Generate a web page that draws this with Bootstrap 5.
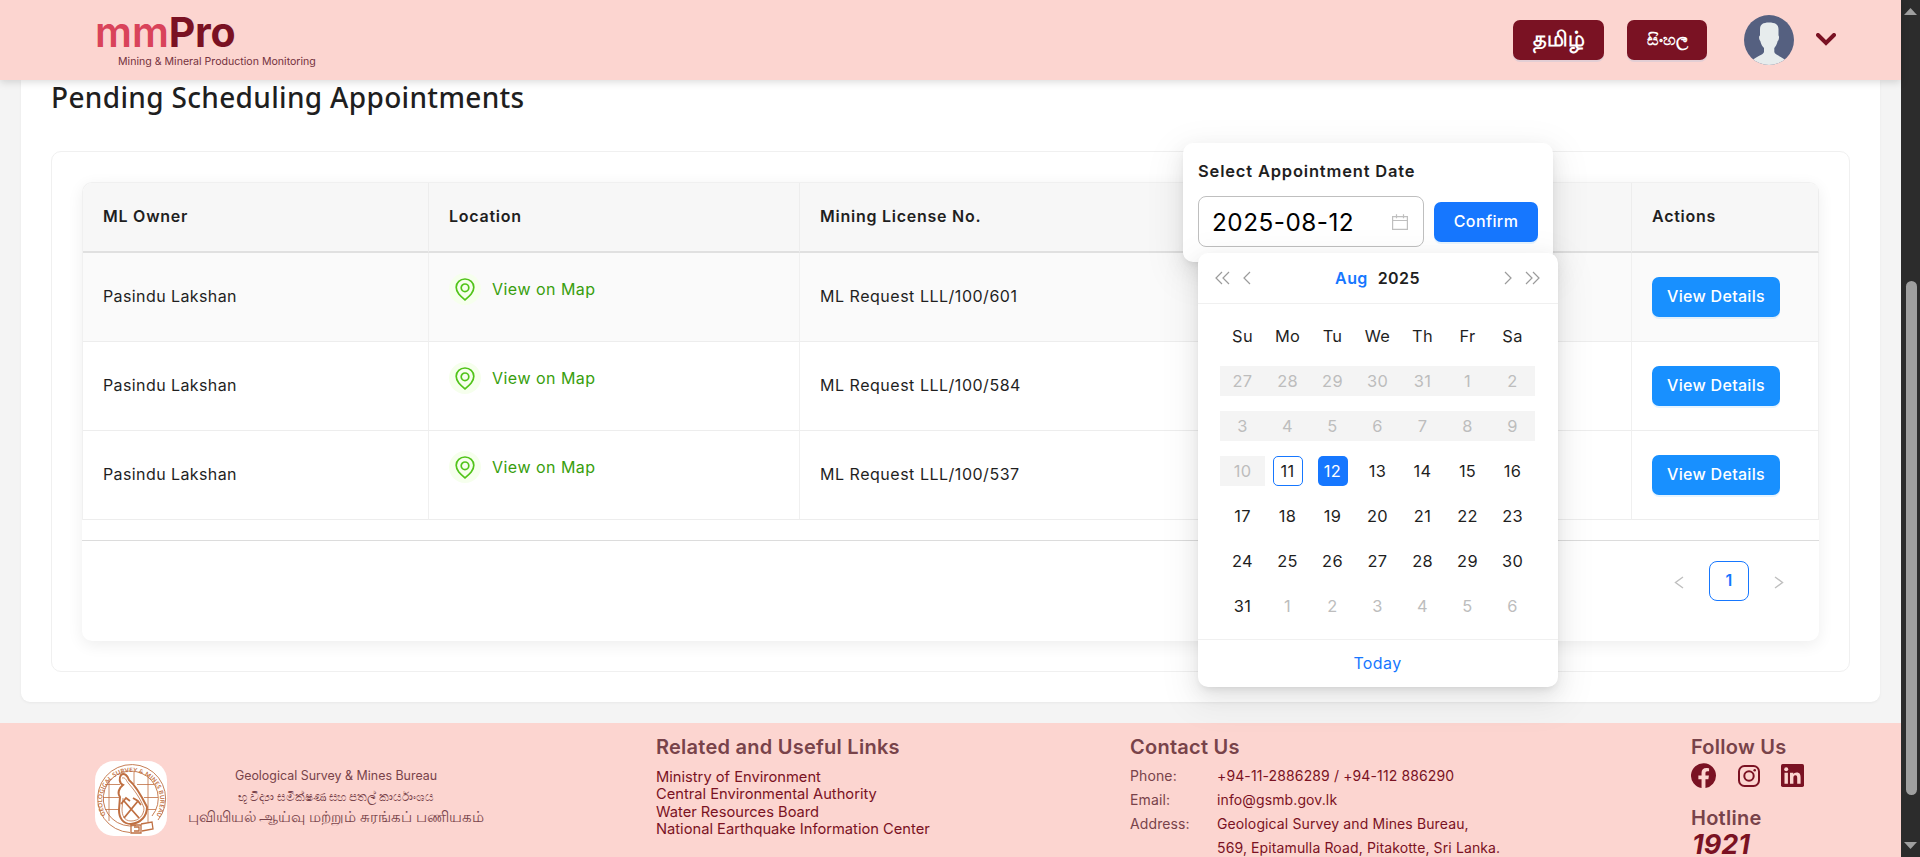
<!DOCTYPE html>
<html lang="en">
<head>
<meta charset="utf-8">
<meta name="viewport" content="width=device-width, initial-scale=1">
<title>mmPro - Pending Scheduling Appointments</title>
<link href="https://cdn.jsdelivr.net/npm/bootstrap@5.3.0/dist/css/bootstrap.min.css" rel="stylesheet">
<style>
:root{--wine:#7a1223;--blue:#1677ff;--ink:#1f1f1f;--line:#f0f0f0}
body{font-family:Inter,"Liberation Sans",sans-serif;font-size:16px;line-height:22px;color:var(--ink);background:#f4f4f4;height:100vh;overflow:hidden;letter-spacing:.4px}
.app-header{height:80px;background:#fcd5d0;z-index:5;box-shadow:0 2px 8px rgba(0,0,0,.15);padding-left:95px;padding-right:65px}
.brand-name{font-size:41px;line-height:43px;font-weight:600;color:#d9435a;letter-spacing:0}
.brand-name b{font-weight:700;color:var(--wine);letter-spacing:-.3px}
.brand-tag{font-size:10.6px;line-height:14px;color:#75323e;margin:1px 0 0 23px;letter-spacing:0}
.btn-lang{height:40px;background:var(--wine);color:#fff;border:0;border-radius:7px;box-shadow:0 2px 0 rgba(5,145,255,.1);letter-spacing:0;padding:0 0 2px}
.btn-lang:hover{background:var(--wine);color:#fff}
.btn-ta{width:91px;font-size:20.8px;font-weight:600;margin-right:23px}
.btn-si{width:80px;font-size:16px;font-weight:600;margin-right:37px}
.chev{margin:0 0 1px -2px}
.page-card{margin:0 21px;padding:0 30px;height:622px;border-radius:0 0 9px 9px;background:#fff;box-shadow:0 1px 3px rgba(0,0,0,.05)}
.page-title{font:500 28px/34px "Noto Sans","Open Sans",sans-serif;letter-spacing:.33px;margin:0 0 37px}
.panel{border:1px solid var(--line);border-radius:10px;padding:30px;height:521px}
.table-box{height:459px;border-radius:10px;background:#fff;box-shadow:0 4px 16px rgba(0,0,0,.07)}
.appt{table-layout:fixed;width:100%;border-collapse:separate;border-spacing:0;border-left:1px solid var(--line);border-top:1px solid var(--line);border-radius:10px 10px 0 0;overflow:hidden}
.c-owner{width:346px}.c-loc{width:371px}.c-lic{width:430px}.c-act{width:187px}
.appt th{height:70px;padding:0 20px 3px;background:#f7f7f7;font-weight:600;letter-spacing:.75px;border-bottom:2px solid #e0e0e0;border-right:1px solid #ededed}
.appt td{height:89px;padding:0 20px 2px;border-bottom:1px solid #ededed;border-right:1px solid var(--line);vertical-align:middle}
.appt td.act{padding-bottom:0}
.appt .no-edge{border-right:0}
.appt td.no-edge{letter-spacing:.52px}
.appt tr.hovered td{background:#fafafa}
.map-link{color:#389e0d;text-decoration:none;margin-bottom:14px;letter-spacing:.48px}
.pin{width:32px;height:32px;border-radius:50%;background:#f6ffed;margin-right:11px}
.btn-details{width:128px;height:40px;border:0;border-radius:7px;background:#1890ff;color:#fff;padding:0 0 2px;font-weight:500;letter-spacing:.3px;box-shadow:0 2px 0 rgba(5,145,255,.1)}
.pager{border-top:1px solid #dcdcdc;margin-top:20px;padding:20px 20px 0;gap:10px}
.pager>*{width:40px;height:40px}
.pager svg{margin-top:2px}
.page-now{border:1px solid var(--blue);border-radius:8px;color:var(--blue);font-weight:600;padding-bottom:2px}
.popover-box{left:1183px;top:143px;width:370px;height:119px;border-radius:10px;background:#fff;padding:15px;box-shadow:0 8px 20px rgba(0,0,0,.08),0 4px 8px -4px rgba(0,0,0,.12),0 11px 35px 10px rgba(0,0,0,.05);z-index:6}
.pop-title{font-size:16.5px;font-weight:600;letter-spacing:.82px;line-height:26px;margin-bottom:12px}
.date-input{width:226px;height:51px;border:1px solid #bfbfbf;border-radius:8px;padding:0 15px 0 13px;font-size:24.3px;letter-spacing:.5px;color:#000}
.btn-confirm{width:104px;height:40px;border:0;border-radius:7px;background:var(--blue);color:#fff;padding:0 0 2px;font-weight:500;letter-spacing:.4px;box-shadow:0 2px 0 rgba(5,145,255,.1)}
.cal{left:1198px;top:253px;width:360px;height:434px;border-radius:10px;background:#fff;box-shadow:0 8px 20px rgba(0,0,0,.08),0 4px 8px -4px rgba(0,0,0,.12),0 11px 35px 10px rgba(0,0,0,.05);z-index:7}
.cal-head{height:51px;border-bottom:1px solid var(--line);padding:0 18px 1px 17px;font-weight:600}
.cal-month{color:var(--blue);margin-right:10px}
.cal-grid{display:grid;grid-template-columns:repeat(7,45px);grid-auto-rows:45px;padding:9px 0 0 22px;height:335px;font-size:16.4px;letter-spacing:.3px}
.cal-grid>div{text-align:center;padding-top:8px;line-height:30px}
.cal-grid span{display:block;height:30px}
.cal-grid .off{color:#bdbdbd}
.cal-grid .shut span{background:#f4f4f4}
.cal-grid .today span,.cal-grid .picked span{width:30px;margin:0 auto;border-radius:5px}
.cal-grid .today span{border:1px solid var(--blue);line-height:28px}
.cal-grid .picked span{background:var(--blue);color:#fff}
.cal-foot{height:48px;border-top:1px solid var(--line);color:var(--blue);padding:0 1px 2px 0}
.app-footer{margin-top:21px;height:160px;background:#fcd5d0;color:#78434a;letter-spacing:0}
.app-footer h5{font-size:20px;font-weight:600;line-height:24px;letter-spacing:.25px;margin:12px 0 0;color:#78434a}
.f-brand{width:656px;padding:38px 0 0 95px}
.f-names{width:300px;margin-left:19px;padding-top:5px;text-align:center;white-space:nowrap;line-height:20px}
.name-en{font-size:12.4px;letter-spacing:.02px}
.name-si{font-size:11.6px;letter-spacing:-.1px;font-weight:500;margin-top:1px}
.name-ta{font-size:15px;font-weight:500}
.f-links{width:474px;font-size:14.7px;line-height:17.3px;color:var(--wine)}
.app-footer .f-links h5{margin-bottom:10px}
.f-contact{width:561px;font-size:14px;line-height:24px;letter-spacing:.12px}
.f-contact dl{margin:5px 0 0}
.f-contact dt{width:87px;font-weight:400}
.f-contact dd{margin:0;color:var(--wine)}
.social{height:25px;margin-top:4px;gap:21.5px}
.app-footer .hot-head{margin-top:18px}
.hotline{font-size:27px;line-height:24px;margin-top:3px;font-weight:700;font-style:italic;color:var(--wine);padding-left:1px}
.scroll-rail{width:19px;background:#2c2c2c;padding:8px 0 8px}
.scroll-thumb{width:11px;height:514px;border-radius:6px;background:#9f9f9f;margin-top:266px;margin-left:1px}
</style>
</head>
<body class="d-flex">
<div class="flex-grow-1 position-relative">
  <header class="app-header position-relative d-flex align-items-center">
    <div class="me-auto">
      <div class="brand-name">mm<b>Pro</b></div>
      <div class="brand-tag">Mining &amp; Mineral Production Monitoring</div>
    </div>
    <button class="btn btn-lang btn-ta" lang="ta">தமிழ்</button>
    <button class="btn btn-lang btn-si" lang="si">සිංහල</button>
    <svg width="50" height="50" viewBox="0 0 50 50" class="me-4"><defs><clipPath id="face"><circle cx="25" cy="25" r="25"/></clipPath></defs><g clip-path="url(#face)"><rect width="50" height="50" fill="#556080"/><path fill="#e7eced" d="M16 14C16 9.500 19 7.500 25 7.500S34.500 9.500 34.500 14V20.500C35.500 21 35 25 33.700 26 33 29.500 31.500 31.500 30.300 33V37C31 40 36 40.500 43 46V51H7V46C14 40.500 19 40 20 37V33C18.500 31.500 17 29.500 16.300 26 15 25 14.500 21 16 20.500Z"/></g></svg>
    <svg class="chev" width="20" height="13" viewBox="0 0 20 13" fill="none" stroke="#7a1223" stroke-width="4" stroke-linecap="round"><path d="M2 2l8 8 8-8"/></svg>
  </header>

  <main class="page-card">
    <h1 class="page-title">Pending Scheduling Appointments</h1>
    <section class="panel">
      <div class="table-box">
        <table class="appt">
          <colgroup><col class="c-owner"><col class="c-loc"><col class="c-lic"><col><col class="c-act"></colgroup>
          <thead><tr><th>ML Owner</th><th>Location</th><th class="no-edge">Mining License No.</th><th></th><th>Actions</th></tr></thead>
          <tbody id="rows"></tbody>
        </table>
        <div class="pager d-flex justify-content-end">
          <div class="d-flex align-items-center justify-content-center"><svg width="10" height="13" viewBox="0 0 10 13" fill="none" stroke="#bfbfbf" stroke-width="1.400"><path d="M9 1L1.500 6.500 9 12"/></svg></div>
          <div class="page-now d-flex align-items-center justify-content-center">1</div>
          <div class="d-flex align-items-center justify-content-center"><svg width="10" height="13" viewBox="0 0 10 13" fill="none" stroke="#bfbfbf" stroke-width="1.400"><path d="M1 1l7.500 5.500L1 12"/></svg></div>
        </div>
      </div>
    </section>
  </main>

  <footer class="app-footer d-flex">
    <div class="f-brand d-flex">
      <svg width="72" height="75" viewBox="0 0 72 75" class="flex-shrink-0">
        <defs><path id="ring" d="M10.800 54A29 29 0 1 1 61.500 54"/></defs>
        <rect width="72" height="75" rx="19" fill="#fff"/>
        <g fill="none" stroke="#bf6f42" stroke-width=".9">
          <path d="M35 71.500A34 34 0 1 1 63 59M41 64.500A27.500 27.500 0 1 1 57 55" />
          <path d="M14 18v42M53 15v46M39 11v12M10 23.500h15M42 23.500h17M8 36.500h16M49 36.500h14M10 48.500h14M52 48.500h9" stroke-width=".8"/>
          <path d="M26 14C29 11 33 15 34 19 40 24 47 36 52 46 52 55 46 62 36 63 28 63 24 57 24 49L25 36C22 32 24 27 28 24 24 22 24 17 26 14Z" stroke-width="2"/>
          <path d="M27 17C31 16 31 20 34 23 41 31 46 39 49 47 49 54 44 60 36 60 29 60 27 54 27 48L28 37" stroke-width=".8"/>
          <path d="M29 57L43 40M44 57L29 40M26 43l5-6 4 3M38 37l5 3 3 4" stroke-width="1.800"/>
          <path d="M36 64h10v8H36zM39 66h5v4h-5M46 63l11-2 1 7-11 2" stroke-width="1.300"/>
        </g>
        <text font-family="Lato, sans-serif" font-weight="700" font-size="6" fill="#bf6f42"><textPath href="#ring" textLength="121">GEOLOGICAL SURVEY &amp; MINES BUREAU</textPath></text>
      </svg>
      <div class="f-names">
        <div class="name-en">Geological Survey &amp; Mines Bureau</div>
        <div class="name-si" lang="si">භූ විද්‍යා සමීක්ෂණ සහ පතල් කාර්යාංශය</div>
        <div class="name-ta" lang="ta">புவியியல் ஆய்வு மற்றும் சுரங்கப் பணியகம்</div>
      </div>
    </div>
    <div class="f-links">
      <h5>Related and Useful Links</h5>
      <div>Ministry of Environment</div><div>Central Environmental Authority</div><div>Water Resources Board</div><div>National Earthquake Information Center</div>
    </div>
    <div class="f-contact">
      <h5>Contact Us</h5>
      <dl>
        <div class="d-flex"><dt>Phone:</dt><dd>+94-11-2886289 / +94-112 886290</dd></div>
        <div class="d-flex"><dt>Email:</dt><dd>info@gsmb.gov.lk</dd></div>
        <div class="d-flex"><dt>Address:</dt><dd>Geological Survey and Mines Bureau,<br>569, Epitamulla Road, Pitakotte, Sri Lanka.</dd></div>
      </dl>
    </div>
    <div>
      <h5>Follow Us</h5>
      <div class="social d-flex align-items-center">
        <svg width="25" height="25" viewBox="0 0 16 16" fill="#7a1223"><path d="M16 8.050A8 8 0 1 0 6.750 16V10.370H4.720V8.050H6.750V6.280C6.750 4.270 7.950 3.150 9.770 3.150c.88 0 1.800.16 1.800.16V5.280H10.550c-1 0-1.300.62-1.300 1.260V8.050h2.220l-.36 2.320H9.250V16A8 8 0 0 0 16 8.050Z"/></svg>
        <svg width="22" height="22" viewBox="0 0 22 22" fill="none" stroke="#7a1223" stroke-width="2"><rect x="1" y="1" width="20" height="20" rx="5.500"/><circle cx="11" cy="11" r="4.700"/><circle cx="16.700" cy="5.300" r="1.300" fill="#7a1223" stroke="none"/></svg>
        <svg width="23" height="23" viewBox="0 0 23 23"><rect width="23" height="23" rx="1.700" fill="#7a1223"/><path fill="#fcd5d0" d="M3.500 8.700h3.400v11H3.500zM9 8.700h3.300v1.500c.6-1 1.700-1.800 3.300-1.800 3.400 0 4 2.200 4 5.200v6.100h-3.400v-5.400c0-1.300 0-3-1.800-3s-2 1.400-2 2.900v5.500H9z"/><circle cx="5.200" cy="5.200" r="2" fill="#fcd5d0"/></svg>
      </div>
      <h5 class="hot-head">Hotline</h5>
      <div class="hotline">1921</div>
    </div>
  </footer>

  <div class="popover-box position-absolute">
    <div class="pop-title">Select Appointment Date</div>
    <div class="d-flex align-items-center justify-content-between">
      <div class="date-input d-flex align-items-center justify-content-between"><span>2025-08-12</span>
        <svg width="16" height="16" viewBox="0 0 16 16" fill="none" stroke="#bfbfbf" stroke-width="1.200"><path d="M.6 2.600h14.800v12.800H.6zM.6 6.500h14.800M4.500.2v4M11.500.2v4"/></svg>
      </div>
      <button class="btn btn-confirm">Confirm</button>
    </div>
  </div>

  <div class="cal position-absolute">
    <div class="cal-head d-flex align-items-center">
      <svg width="38" height="14" viewBox="0 0 38 14" fill="none" stroke="#9b9b9b" stroke-width="1.200"><path d="M7 1L1 7l6 6M14 1L8 7l6 6M35 1L29 7l6 6"/></svg>
      <div class="flex-grow-1 text-center"><span class="cal-month">Aug</span><span>2025</span></div>
      <svg width="38" height="14" viewBox="0 0 38 14" fill="none" stroke="#9b9b9b" stroke-width="1.200"><path d="M3 1l6 6-6 6M24 1l6 6-6 6M31 1l6 6-6 6"/></svg>
    </div>
    <div class="cal-grid" id="days"></div>
    <div class="cal-foot d-flex align-items-center justify-content-center">Today</div>
  </div>
</div>

<div class="scroll-rail d-flex flex-column align-items-center flex-shrink-0">
  <svg width="13" height="7" viewBox="0 0 13 7" fill="#9f9f9f"><path d="M0 7L6.500 0 13 7z"/></svg>
  <div class="scroll-thumb"></div>
  <svg width="13" height="7" viewBox="0 0 13 7" fill="#9f9f9f" class="mt-auto"><path d="M0 0L6.500 7 13 0z"/></svg>
</div>

<script>
const pin = '<svg width="20" height="23" viewBox="0 0 20 23" fill="none" stroke="#52c41a" stroke-width="1.700"><path d="M10 21.800C5.500 18 1.200 14.500 1.200 9.300a8.800 8.300 0 0 1 17.600 0C18.800 14.500 14.500 18 10 21.800Z"/><circle cx="10" cy="9.800" r="3.800"/></svg>';
document.getElementById('rows').innerHTML = ['601', '584', '537'].map((n, i) =>
  `<tr class="${i ? '' : 'hovered'}"><td>Pasindu Lakshan</td>
   <td><a href="#" class="map-link d-flex align-items-center"><span class="pin d-flex align-items-center justify-content-center">${pin}</span>View on Map</a></td>
   <td class="no-edge">ML Request LLL/100/${n}</td><td></td>
   <td class="act"><button class="btn btn-details">View Details</button></td></tr>`).join('');

let html = ['Su', 'Mo', 'Tu', 'We', 'Th', 'Fr', 'Sa'].map(d => `<div>${d}</div>`).join('');
for (let i = 0; i < 42; i++) {
  const day = i < 5 ? 27 + i : i < 36 ? i - 4 : i - 35;
  const cls = i < 15 ? 'off shut' : i === 15 ? 'today' : i === 16 ? 'picked' : i > 35 ? 'off' : '';
  html += `<div class="${cls}"><span>${day}</span></div>`;
}
document.getElementById('days').innerHTML = html;
</script>
<script src="https://cdn.jsdelivr.net/npm/bootstrap@5.3.0/dist/js/bootstrap.bundle.min.js"></script>
</body>
</html>
